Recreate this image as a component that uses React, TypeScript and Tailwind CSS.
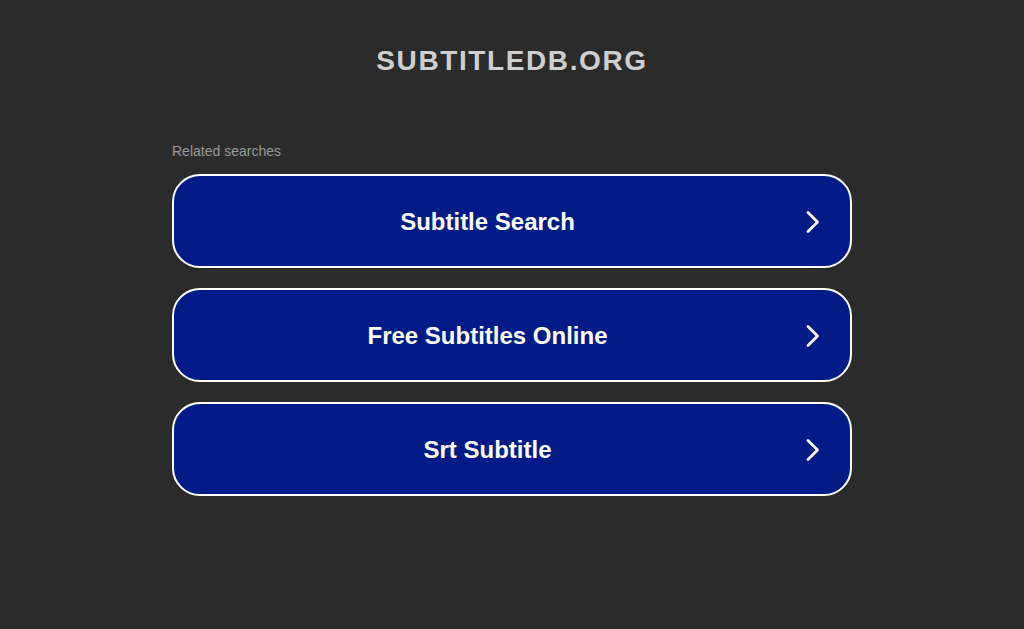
export default function App() {
  const items = ['Subtitle Search', 'Free Subtitles Online', 'Srt Subtitle'];

  return (
    <div className="min-h-[629px] bg-[#2b2b2b] font-['Liberation_Sans',Arial,sans-serif]">
      <div className="pt-[46px] text-center">
        <h1 className="text-[28px] leading-[30px] font-bold tracking-[1.6px] text-[#cfcfcf]">SUBTITLEDB.ORG</h1>
      </div>

      <div className="mx-auto mt-[67px] w-[680px]">
        <p className="text-sm leading-4 text-[#999999]">Related searches</p>
        <div className="mt-[15px] flex flex-col gap-[20px]">
          {items.map((label) => (
            <a
              key={label}
              href="#"
              className="flex h-[94px] items-center rounded-[28px] border-2 border-white bg-[#021b87] pt-[2px] pr-[25px]"
            >
              <span className="flex-1 text-center text-2xl font-bold text-white">{label}</span>
              <svg width="24" height="24" viewBox="0 0 24 24" fill="none" stroke="white" strokeWidth="2.8" strokeLinecap="round" strokeLinejoin="round">
                <path d="M7 2.5 L16.5 12 L7 21.5" />
              </svg>
            </a>
          ))}
        </div>
      </div>
    </div>
  );
}
